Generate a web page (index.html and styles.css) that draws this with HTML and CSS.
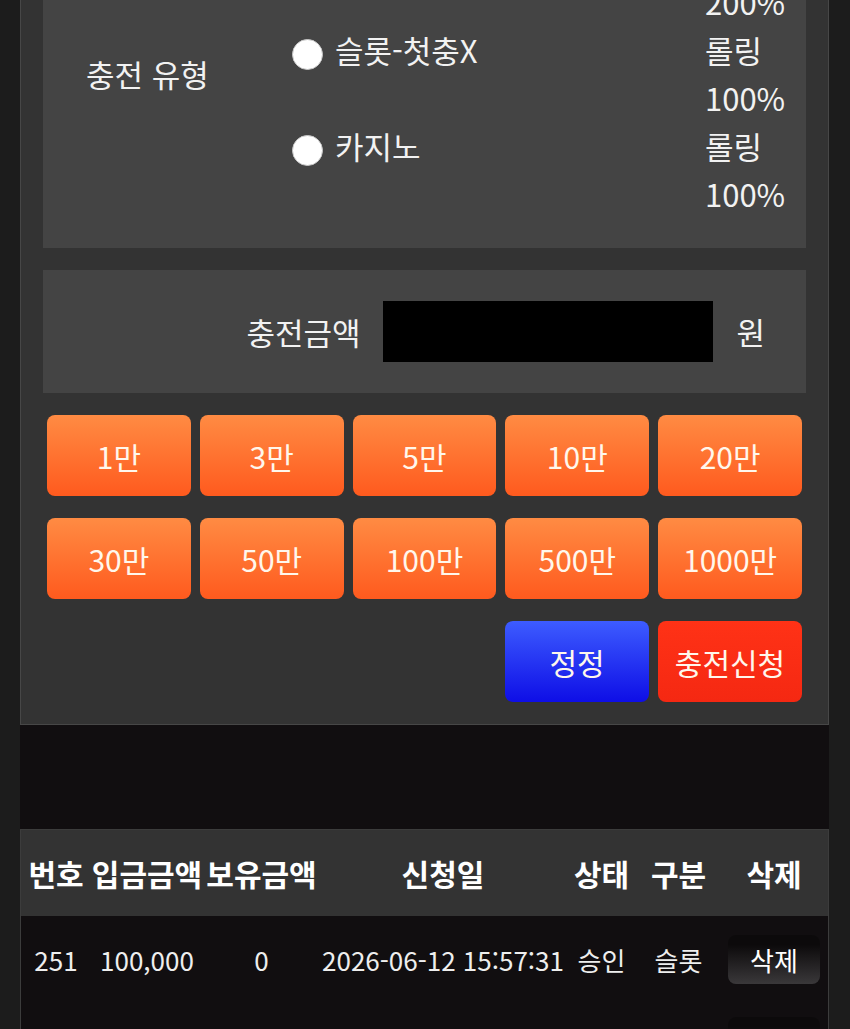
FILE: index.html
```html
<!DOCTYPE html>
<html lang="ko">
<head>
    <meta charset="UTF-8">
    <meta name="viewport" content="width=device-width, initial-scale=1.0">
    <title>충전신청</title>
    <link rel="stylesheet" href="styles.css">
</head>
<body>
    <div id="charge-wrap">
        <div class="charge-panel">
            <div class="type-box">
                <div class="type-label">충전 유형</div>
                <div class="type-options">
                    <label class="type-option">
                        <span class="option-name"><input type="radio" name="ctype"> 슬롯-첫충O</span>
                        <span class="option-rate">롤링 200%</span>
                    </label>
                    <label class="type-option">
                        <span class="option-name"><input type="radio" name="ctype"> 슬롯-첫충X</span>
                        <span class="option-rate">롤링 100%</span>
                    </label>
                    <label class="type-option">
                        <span class="option-name"><input type="radio" name="ctype"> 카지노</span>
                        <span class="option-rate">롤링 100%</span>
                    </label>
                </div>
            </div>

            <div class="amount-box">
                <span class="amount-label">충전금액</span>
                <input type="text" id="amount" class="amount-input">
                <span class="amount-unit">원</span>
            </div>

            <div class="quick-grid">
                <button class="btn-quick">1만</button>
                <button class="btn-quick">3만</button>
                <button class="btn-quick">5만</button>
                <button class="btn-quick">10만</button>
                <button class="btn-quick">20만</button>
                <button class="btn-quick">30만</button>
                <button class="btn-quick">50만</button>
                <button class="btn-quick">100만</button>
                <button class="btn-quick">500만</button>
                <button class="btn-quick">1000만</button>
            </div>

            <div class="action-row">
                <button class="btn-action btn-reset">정정</button>
                <button class="btn-action btn-submit">충전신청</button>
            </div>
        </div>

        <table class="history">
            <colgroup>
                <col style="width:70px">
                <col style="width:112px">
                <col style="width:117px">
                <col style="width:246px">
                <col style="width:71px">
                <col style="width:83px">
                <col style="width:108px">
            </colgroup>
            <thead>
                <tr>
                    <th>번호</th>
                    <th>입금금액</th>
                    <th>보유금액</th>
                    <th>신청일</th>
                    <th>상태</th>
                    <th>구분</th>
                    <th>삭제</th>
                </tr>
            </thead>
            <tbody>
                <tr>
                    <td>251</td>
                    <td>100,000</td>
                    <td>0</td>
                    <td>2026-06-12 15:57:31</td>
                    <td>승인</td>
                    <td>슬롯</td>
                    <td><button class="btn-delete">삭제</button></td>
                </tr>
                <tr>
                    <td>250</td>
                    <td>50,000</td>
                    <td>0</td>
                    <td>2026-06-11 21:04:12</td>
                    <td>승인</td>
                    <td>슬롯</td>
                    <td><button class="btn-delete">삭제</button></td>
                </tr>
            </tbody>
        </table>
    </div>
</body>
</html>
```

FILE: styles.css
```css
body {
    margin: 0;
    background-color: #1c1c1c;
    font-family: "Noto Sans CJK KR", "Noto Sans", sans-serif;
    color: #f2f2f2;
    overflow: hidden;
}
#charge-wrap {
    width: 809px;
    margin: -121px 0 0 20px;
    background-color: #110e10;
    min-height: 1300px;
}
.charge-panel {
    background-color: #333333;
    border: 1px solid #474747;
    padding: 22px;
}
.type-box {
    display: flex;
    background-color: #444444;
    padding: 28px 0 30px 43px;
    font-size: 31px;
    line-height: 48px;
}
.type-label {
    width: 206px;
    align-self: center;
}
.type-options {
    flex: 1;
}
.type-option {
    display: flex;
    align-items: flex-start;
}
.option-name {
    flex: 1;
    display: flex;
    align-items: flex-start;
    gap: 12px;
}
.option-name input {
    appearance: none;
    -webkit-appearance: none;
    width: 31px;
    height: 31px;
    margin: 13px 0 0;
    border-radius: 50%;
    background-color: #ffffff;
    border: 1px solid #c8c8c8;
    box-sizing: border-box;
}
.option-rate {
    width: 101px;
}
.amount-box {
    display: flex;
    align-items: center;
    justify-content: flex-end;
    gap: 23px;
    height: 123px;
    margin-top: 22px;
    padding-right: 41px;
    background-color: #444444;
    font-size: 31px;
}
.amount-input {
    width: 330px;
    height: 61px;
    border: none;
    background-color: #000;
    color: #fff;
    font-size: 26px;
    padding: 0 10px;
    box-sizing: border-box;
}
.quick-grid {
    display: grid;
    grid-template-columns: repeat(5, 1fr);
    gap: 22px 9px;
    margin: 22px 4px 0;
}
.btn-quick, .btn-action {
    height: 81px;
    border: none;
    border-radius: 8px;
    font-family: "Noto Sans CJK KR", "Noto Sans", sans-serif;
    font-size: 30px;
    color: #fff7ec;
    cursor: pointer;
}
.btn-quick {
    background: linear-gradient(to bottom, #ff8b43, #ff5a1e);
}
.action-row {
    display: flex;
    justify-content: flex-end;
    gap: 9px;
    margin: 22px 4px 0;
}
.btn-action {
    width: 144px;
}
.btn-reset {
    background: linear-gradient(to bottom, #3d5cff, #0e0ee6);
}
.btn-submit {
    background: linear-gradient(to bottom, #ff3216, #f52812);
}
.history {
    width: 809px;
    margin-top: 104px;
    border-collapse: separate;
    border-spacing: 0;
    border: 1px solid #3c3c3c;
    border-bottom: none;
    table-layout: fixed;
}
.history th, .history td {
    padding: 0;
    text-align: center;
    white-space: nowrap;
}
.history th {
    height: 86px;
    background-color: #333333;
    font-size: 30px;
    font-weight: 700;
    color: #ffffff;
}
.history td {
    height: 78px;
    padding-top: 4px;
    font-size: 26px;
    color: #eeeeee;
}
.btn-delete {
    width: 92px;
    height: 49px;
    margin-top: 1px;
    border: none;
    border-radius: 8px;
    background: linear-gradient(to bottom, #0c0a0b 20%, #3a383a);
    color: #ffffff;
    font-family: "Noto Sans CJK KR", "Noto Sans", sans-serif;
    font-size: 26px;
    cursor: pointer;
}
```
